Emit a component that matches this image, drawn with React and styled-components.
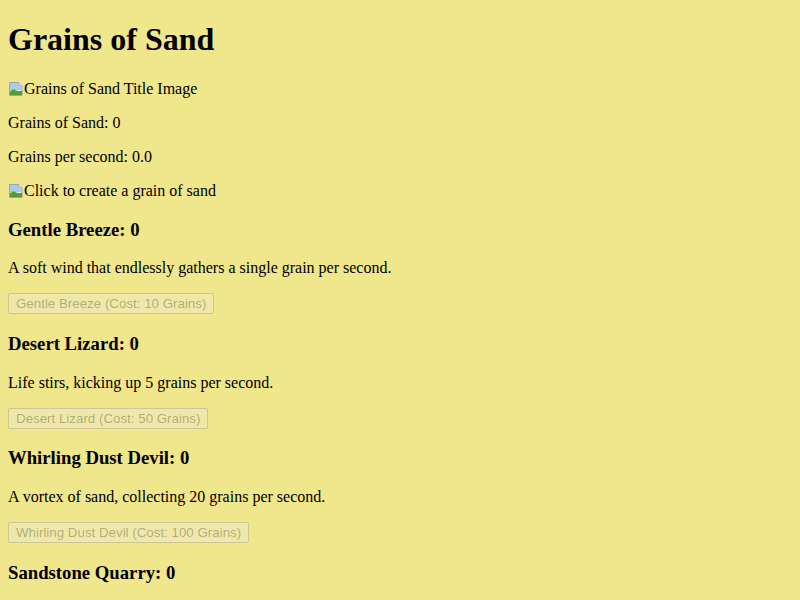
import React, { useState, useEffect } from 'react';
import styled, { createGlobalStyle } from 'styled-components';

const GlobalStyle = createGlobalStyle`
  html, body {
    background-color: #f0e68c;
  }
  body {
    margin: 0;
    font-family: "Liberation Serif", "Times New Roman", serif;
    font-size: 16px;
    color: #000;
  }
`;

const Page = styled.div`
  padding: 0 8px;
`;

const Title = styled.h1`
  font-size: 2em;
  font-weight: bold;
  margin: 0.67em 0;
`;

const Stat = styled.p`
  margin: 1em 0;
`;

const ImageLine = styled.div`
  display: block;
  line-height: normal;
`;

const BrokenImage = styled.span`
  display: inline-flex;
  align-items: baseline;
  cursor: ${(p) => (p.$clickable ? 'pointer' : 'default')};

  svg {
    width: 16px;
    height: 16px;
    align-self: center;
    flex-shrink: 0;
  }
`;

const Upgrade = styled.div``;

const UpgradeTitle = styled.h3`
  font-size: 1.17em;
  font-weight: bold;
  margin: 1em 0;
`;

const UpgradeText = styled.p`
  margin: 1em 0;
`;

const BuyButton = styled.button`
  font-family: "Liberation Sans", Arial, sans-serif;
  font-size: 13.333px;
  padding: 2px 7px;
  border: 1px solid rgba(118, 118, 118, 0.3);
  border-radius: 2px;
  background-color: rgba(239, 239, 239, 0.3);
  color: rgba(16, 16, 16, 0.3);
  line-height: normal;

  &:not(:disabled) {
    color: #000;
    background-color: #efefef;
    border-color: #767676;
    cursor: pointer;
  }
`;

function BrokenIcon() {
  return (
    <svg viewBox="0 0 16 16">
      <path d="M1.5 1.5h9l3.5 3.5v9.5H1.5z" fill="#f4f6f8" stroke="#9aa3ad" strokeWidth="1" />
      <path d="M10.5 1.5v3.5h3.5" fill="#dde2e7" stroke="#9aa3ad" strokeWidth="1" />
      <path d="M2 2h8.5v3.5H14V9H2z" fill="#a9cbee" />
      <path d="M2 14V10.5c2-2.5 4-2.5 6-1.2 1.5 1 3.5 1.2 6 0.5V14z" fill="#4f9d3a" />
      <path d="M2 10.5c2-2.5 4-2.5 6-1.2" fill="none" stroke="#8cc06e" strokeWidth="1" />
    </svg>
  );
}

const upgrades = [
  { name: 'Gentle Breeze', text: 'A soft wind that endlessly gathers a single grain per second.', cost: 10, rate: 1 },
  { name: 'Desert Lizard', text: 'Life stirs, kicking up 5 grains per second.', cost: 50, rate: 5 },
  { name: 'Whirling Dust Devil', text: 'A vortex of sand, collecting 20 grains per second.', cost: 100, rate: 20 },
  { name: 'Sandstone Quarry', text: 'Carved stone crumbles into 50 grains per second.', cost: 500, rate: 50 },
];

export default function App() {
  const [grains, setGrains] = useState(0);
  const [owned, setOwned] = useState(upgrades.map(() => 0));

  const perSecond = upgrades.reduce((sum, u, i) => sum + u.rate * owned[i], 0);

  useEffect(() => {
    if (!perSecond) return undefined;
    const id = setInterval(() => setGrains((g) => g + perSecond), 1000);
    return () => clearInterval(id);
  }, [perSecond]);

  const buy = (i) => {
    if (grains < upgrades[i].cost) return;
    setGrains((g) => g - upgrades[i].cost);
    setOwned((o) => o.map((n, j) => (j === i ? n + 1 : n)));
  };

  return (
    <Page>
      <GlobalStyle />
      <Title>Grains of Sand</Title>
      <ImageLine>
        <BrokenImage>
          <BrokenIcon />
          Grains of Sand Title Image
        </BrokenImage>
      </ImageLine>
      <Stat>Grains of Sand: {Math.floor(grains)}</Stat>
      <Stat>Grains per second: {perSecond.toFixed(1)}</Stat>
      <ImageLine>
        <BrokenImage $clickable onClick={() => setGrains((g) => g + 1)}>
          <BrokenIcon />
          Click to create a grain of sand
        </BrokenImage>
      </ImageLine>
      {upgrades.map((u, i) => (
        <Upgrade key={u.name}>
          <UpgradeTitle>{u.name}: {owned[i]}</UpgradeTitle>
          <UpgradeText>{u.text}</UpgradeText>
          <BuyButton disabled={grains < u.cost} onClick={() => buy(i)}>
            {u.name} (Cost: {u.cost} Grains)
          </BuyButton>
        </Upgrade>
      ))}
    </Page>
  );
}
